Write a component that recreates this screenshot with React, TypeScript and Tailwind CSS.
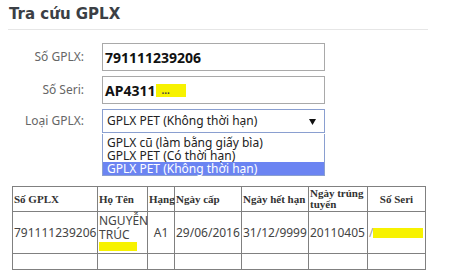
import React from 'react';

const sans = "font-['Noto_Sans',sans-serif]";

const options = ['GPLX cũ (làm bằng giấy bìa)', 'GPLX PET (Có thời hạn)', 'GPLX PET (Không thời hạn)'];

export default function App() {
  return (
    <div className="w-[451px] h-[273px] bg-white overflow-hidden">
      {/* Title */}
      <div className="ml-[8px] w-[420px] pt-[4px] h-[30px] border-b border-[#e6e6e6]">
        <h1 className="pl-[1px] text-[15px] leading-[20px] font-bold text-[#3b3f45] font-['DejaVu_Sans',sans-serif]">
          Tra cứu GPLX
        </h1>
      </div>

      {/* Form */}
      <div className={`mt-[13px] flex flex-col gap-[5px] ${sans}`}>
        <div className="flex items-center">
          <label className="w-[84px] text-right text-[12px] text-[#666]">Số GPLX:</label>
          <div className="ml-[18px] w-[223px] h-[28px] border border-[#a9a9a9] flex items-center px-[2px] text-[14px] font-bold text-[#111]">
            791111239206
          </div>
        </div>
        <div className="flex items-center">
          <label className="w-[84px] text-right text-[12px] text-[#666]">Số Seri:</label>
          <div className="ml-[18px] w-[223px] h-[28px] border border-[#a9a9a9] flex items-center px-[2px] text-[14px] font-bold text-[#111]">
            AP4311
            <span className="ml-[1px] inline-block w-[30px] h-[13px] bg-[#f7f200] text-[10px] leading-[13px] text-[#444] pl-[5px]">...</span>
          </div>
        </div>
        <div className="flex items-center">
          <label className="w-[84px] text-right text-[12px] text-[#666]">Loại GPLX:</label>
          <div className="relative ml-[18px] w-[223px]">
            <div className="h-[24px] border border-[#8a9fd0] flex items-center justify-between pl-[4px] pr-[8px] text-[12px] text-[#222]">
              <span>GPLX PET (Không thời hạn)</span>
              <svg width="7" height="7" viewBox="0 0 7 7">
                <polygon points="0,1 7,1 3.5,7" fill="#111" />
              </svg>
            </div>
            {/* open option list */}
            <div className="absolute left-0 top-[25px] z-10 w-[223px] border border-t-0 border-[#8a9fd0] bg-white pt-[2px] text-[12px] leading-[13px]">
              {options.map((o, i) => (
                <div
                  key={i}
                  className={`pl-[4px] h-[13px] ${i === 2 ? 'bg-[#6b84f2] text-white' : 'text-[#222]'}`}
                >
                  {o}
                </div>
              ))}
            </div>
          </div>
        </div>
      </div>

      {/* Result table */}
      <table className="ml-[12px] mt-[53px] table-fixed border-collapse w-[413px]">
        <colgroup>
          <col className="w-[85px]" />
          <col className="w-[50px]" />
          <col className="w-[27px]" />
          <col className="w-[67px]" />
          <col className="w-[67px]" />
          <col className="w-[59px]" />
          <col className="w-[58px]" />
        </colgroup>
        <thead>
          <tr className="h-[25px] font-['Liberation_Serif',serif] text-[11px] font-bold text-[#333] leading-[11px]">
            <th className="border border-[#808080] px-[1px] text-left">Số GPLX</th>
            <th className="border border-[#808080] px-[1px] text-left">Họ Tên</th>
            <th className="border border-[#808080] px-[1px] text-left">Hạng</th>
            <th className="border border-[#808080] px-[1px] text-left">Ngày cấp</th>
            <th className="border border-[#808080] px-[1px] text-left">Ngày hết hạn</th>
            <th className="border border-[#808080] px-[1px] text-left">Ngày trúng tuyển</th>
            <th className="border border-[#808080] px-[1px] text-center">Số Seri</th>
          </tr>
        </thead>
        <tbody className={`${sans} text-[12px] text-[#444]`}>
          <tr className="h-[42px]">
            <td className="border border-[#808080] px-[1px]">791111239206</td>
            <td className="border border-[#808080] px-[1px] leading-[14px]">
              <div>NGUYỄN</div>
              <div>TRÚC</div>
              <div className="w-[38px] h-[9px] bg-[#f7f200]" />
            </td>
            <td className="border border-[#808080] px-[1px] text-center">A1</td>
            <td className="border border-[#808080] px-[1px]">29/06/2016</td>
            <td className="border border-[#808080] px-[1px]">31/12/9999</td>
            <td className="border border-[#808080] px-[1px]">20110405</td>
            <td className="border border-[#808080] px-[1px]">
              <div className="flex items-center">
                <span className="text-[#999]">/</span>
                <span className="inline-block w-[50px] h-[10px] bg-[#f7f200]" />
              </div>
            </td>
          </tr>
          <tr className="h-[16px]">
            <td className="border border-[#808080]" />
            <td className="border border-[#808080]" />
            <td className="border border-[#808080]" />
            <td className="border border-[#808080]" />
            <td className="border border-[#808080]" />
            <td className="border border-[#808080]" />
            <td className="border border-[#808080]" />
          </tr>
        </tbody>
      </table>
    </div>
  );
}
